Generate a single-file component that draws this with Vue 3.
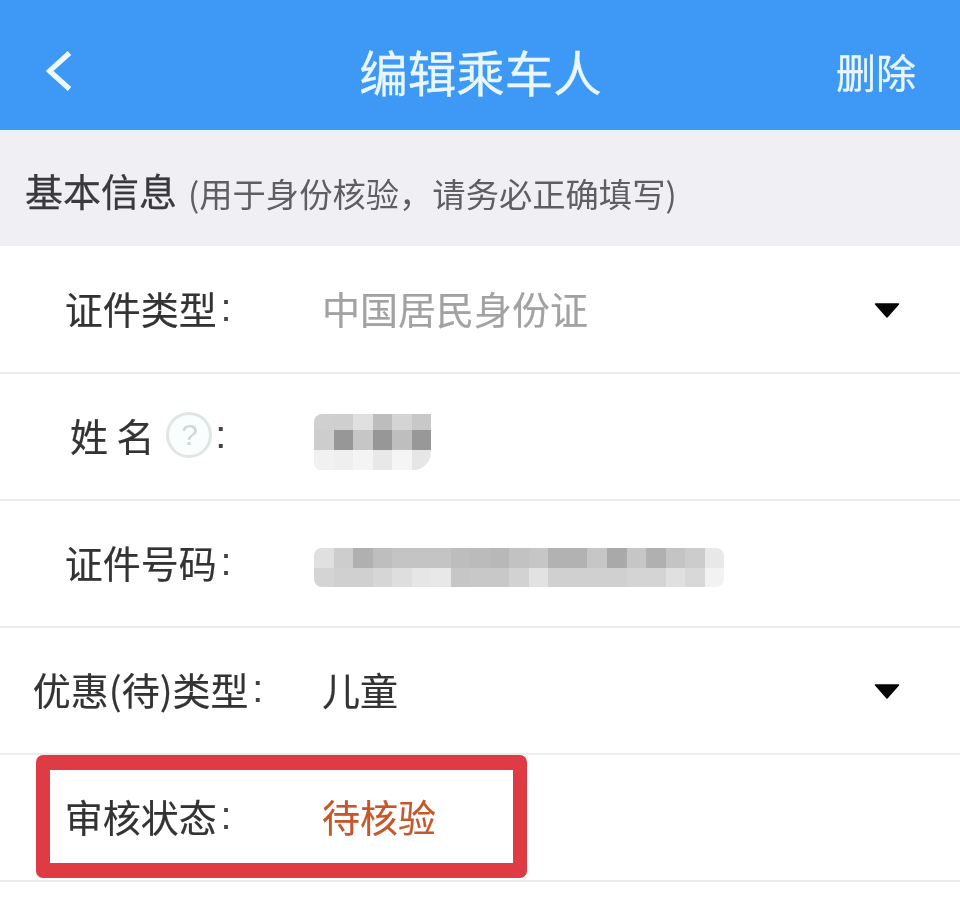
<script setup>
const nameRows = [
  { h: 16, cells: ['#d0d0d0', '#cfcfcf', '#e0e0e0', '#bdbdbd', '#d4d4d4', '#c8c8c8'] },
  { h: 20, cells: ['#cdcdcd', '#979797', '#c6c6c6', '#979797', '#bebebe', '#989898'] },
  { h: 20, cells: ['#f1f1f1', '#efefef', '#f4f4f4', '#e8e8e8', '#f5f5f5', '#e6e6e6'] }
]
const idRows = [
  { h: 20, cells: ['#e0e0e0', '#cdcdcd', '#b0b0b0', '#bebebe', '#c4c4c4', '#c4c4c4', '#c4c4c4', '#bdbdbd', '#bbbbbb', '#b8b8b8', '#c2c2c2', '#c6c6c6', '#b2b2b2', '#b2b2b2', '#c6c6c6', '#a9a9a9', '#c6c6c6', '#b0b0b0', '#c4c4c4', '#cccccc', '#e8e8e8'] },
  { h: 19, cells: ['#d4d4d4', '#d0d0d0', '#d0d0d0', '#d6d6d6', '#dedede', '#e6e6e6', '#e8e8e8', '#c6c6c6', '#c8c8c8', '#c8c8c8', '#d2d2d2', '#e2e2e2', '#d0d0d0', '#d0d0d0', '#d0d0d0', '#d0d0d0', '#d4d4d4', '#d4d4d4', '#e0e0e0', '#d8d8d8', '#f2f2f2'] }
]
</script>

<template>
  <div class="page">
    <header class="topbar">
      <svg class="back" viewBox="0 0 26 40" width="26" height="40" aria-hidden="true">
        <path d="M23.5 2 L3.5 20 L23.5 38" fill="none" stroke="#eef9fd" stroke-width="5.2" stroke-linejoin="miter" />
      </svg>
      <h1 class="title">编辑乘车人</h1>
      <span class="action">删除</span>
    </header>

    <section class="section-head">
      <span class="section-title">基本信息</span>
      <span class="section-note">(用于身份核验，请务必正确填写)</span>
    </section>

    <div class="row first-row">
      <div class="label">证件类型<i class="colon">:</i></div>
      <div class="value muted">中国居民身份证</div>
      <svg class="caret" viewBox="0 0 26 15" width="26" height="15" aria-hidden="true">
        <path d="M1.5 1 H24.5 L13 14 Z" fill="#060606" stroke="#060606" stroke-width="1.5" stroke-linejoin="round" />
      </svg>
    </div>

    <div class="row">
      <div class="label">
        <span class="name-label">姓 名</span>
        <span class="help">?</span>
        <i class="colon">:</i>
      </div>
      <div class="mosaic name-mosaic">
        <div v-for="(r, i) in nameRows" :key="i" class="mosaic-row" :style="{ height: r.h + 'px' }">
          <span v-for="(c, j) in r.cells" :key="j" class="cell" :style="{ background: c }"></span>
        </div>
      </div>
    </div>

    <div class="row">
      <div class="label">证件号码<i class="colon">:</i></div>
      <div class="mosaic id-mosaic">
        <div v-for="(r, i) in idRows" :key="i" class="mosaic-row" :style="{ height: r.h + 'px' }">
          <span v-for="(c, j) in r.cells" :key="j" class="cell" :style="{ background: c }"></span>
        </div>
      </div>
    </div>

    <div class="row">
      <div class="label">优惠(待)类型<i class="colon">:</i></div>
      <div class="value">儿童</div>
      <svg class="caret" viewBox="0 0 26 15" width="26" height="15" aria-hidden="true">
        <path d="M1.5 1 H24.5 L13 14 Z" fill="#060606" stroke="#060606" stroke-width="1.5" stroke-linejoin="round" />
      </svg>
    </div>

    <div class="row status-row">
      <div class="label">审核状态<i class="colon">:</i></div>
      <div class="value pending">待核验</div>
      <div class="highlight"></div>
    </div>
  </div>
</template>

<style>
html, body {
  margin: 0;
  background: #fff;
}
</style>

<style scoped>
.page {
  width: 960px;
  height: 916px;
  overflow: hidden;
  background: #fff;
  font-family: "Noto Sans CJK SC", "Liberation Sans", sans-serif;
  color: #333;
  filter: blur(0.5px);
}
.topbar {
  height: 130px;
  box-sizing: border-box;
  background: #3d99f5;
  display: grid;
  grid-template-columns: 1fr auto 1fr;
  align-items: center;
  padding: 0 44px 0 46px;
  color: #e9f7fd;
}
.back {
  justify-self: start;
  margin-top: 11px;
}
.title {
  margin: 0;
  font-size: 48.5px;
  font-weight: 400;
  line-height: 1;
  margin-top: 12px;
  margin-right: 1px;
  -webkit-text-stroke: 0.3px #e9f7fd;
}
.action {
  justify-self: end;
  font-size: 40px;
  line-height: 1;
  margin-top: 11px;
  -webkit-text-stroke: 0.3px #e9f7fd;
}
.section-head {
  height: 116px;
  box-sizing: border-box;
  background: #f0eff4;
  border-top: 3px solid #e6f3f6;
  display: flex;
  align-items: center;
  padding-left: 25px;
  gap: 11px;
}
.section-title {
  font-size: 38px;
  color: #3a3a3c;
  line-height: 1;
  -webkit-text-stroke: 0.3px #3a3a3c;
}
.section-note {
  font-size: 33.3px;
  color: #5f5f63;
  line-height: 1;
  margin-top: 6px;
}
.row {
  position: relative;
  height: 127px;
  box-sizing: border-box;
  border-bottom: 2px solid #ececec;
  display: grid;
  grid-template-columns: 296px 1fr auto;
  column-gap: 26px;
  align-items: center;
  padding-right: 60px;
  padding-bottom: 3px;
}
.first-row {
  height: 128px;
}
.label {
  display: flex;
  align-items: center;
  justify-content: center;
  font-size: 38px;
  line-height: 1;
  color: #333;
  white-space: nowrap;
  -webkit-text-stroke: 0.2px #333;
}
.colon {
  font-style: normal;
  font-family: "Liberation Sans", sans-serif;
  margin-left: 4px;
  color: #444;
}
.name-label {
  white-space: pre;
}
.help {
  width: 46px;
  height: 46px;
  box-sizing: border-box;
  margin-left: 12px;
  margin-right: -1px;
  border: 3px solid #dfe7e5;
  border-radius: 50%;
  background: #f9fdfd;
  display: flex;
  align-items: center;
  justify-content: center;
  font-size: 30px;
  color: #cfd6d6;
  font-family: "Liberation Sans", sans-serif;
  -webkit-text-stroke: 0;
}
.value {
  font-size: 38px;
  line-height: 1;
  color: #333;
  -webkit-text-stroke: 0.2px currentColor;
}
.muted {
  color: #a2a2a2;
}
.pending {
  color: #c4582a;
}
.mosaic {
  margin-left: -8px;
  display: flex;
  flex-direction: column;
  overflow: hidden;
  filter: blur(0.6px);
}
.name-mosaic {
  width: 117px;
  border-radius: 8px 0 18px 6px;
  margin-top: 14px;
}
.id-mosaic {
  width: 410px;
  border-radius: 8px;
  margin-top: 10px;
}
.mosaic-row {
  display: flex;
}
.cell {
  flex: 1 1 0;
}
.highlight {
  position: absolute;
  left: 36px;
  top: 0;
  width: 491px;
  height: 123px;
  box-sizing: border-box;
  border: solid #de3b45;
  border-width: 15px 14px;
  border-radius: 7px;
  pointer-events: none;
}
.caret {
  display: block;
  margin-top: 5px;
}
</style>
